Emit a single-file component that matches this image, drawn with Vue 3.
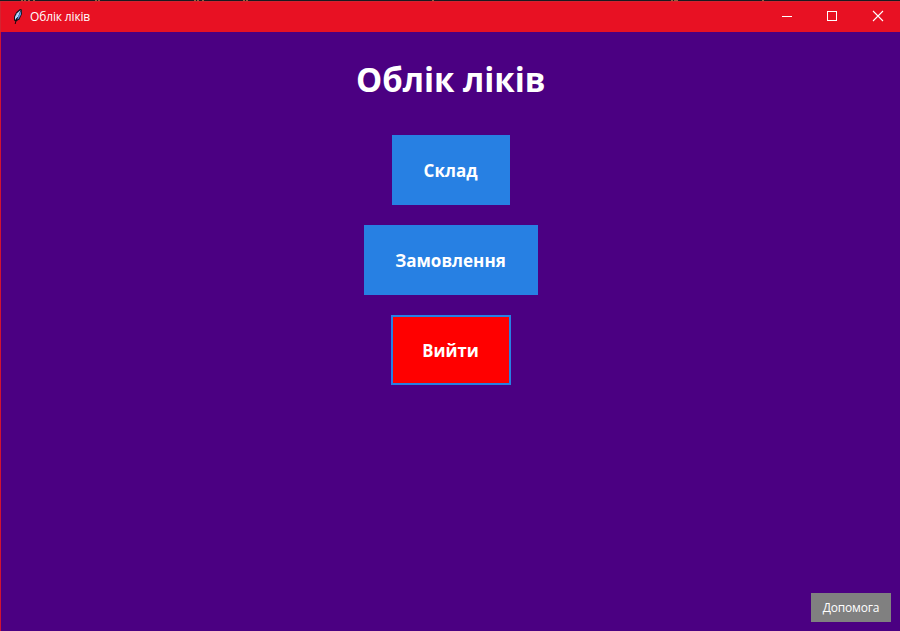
<script setup>
const actions = [
  { label: 'Склад', kind: 'stock' },
  { label: 'Замовлення', kind: 'orders' },
  { label: 'Вийти', kind: 'exit' },
]
const specks = [21, 24, 28, 33, 95, 98, 194, 197, 202, 243, 246, 432, 671, 674, 676, 762]
</script>

<template>
  <div class="window">
    <svg class="backdrop" width="900" height="1" shape-rendering="crispEdges">
      <rect v-for="x in specks" :key="x" :x="x" y="0" width="2" height="1" fill="#96603f" />
    </svg>
    <header class="titlebar">
      <svg class="feather" width="12" height="16" viewBox="0 0 12 16">
        <path d="M8 0 L9.8 .5 L10 5 L7.5 10.2 L4.2 12.4 L2 11.5 L2 7.5 L4.5 3 Z" fill="#10121c" />
        <path d="M8.6 .9 L5 4.2 L3 7.7 L3 11 L6.2 7.5 Z" fill="#b9d8fa" />
        <path d="M9.2 1.5 L9 5.6 L6.9 9.3 L4.4 11 L7 5.8 Z" fill="#5a91da" />
        <path d="M5.5 8.5 L4 11.5 L3.2 15" fill="none" stroke="#08080c" stroke-width=".9" />
      </svg>
      <span class="caption">Облік ліків</span>
      <div class="controls">
        <svg width="46" height="30" shape-rendering="crispEdges"><path d="M18 14.5h10" stroke="#fff" /></svg>
        <svg width="45" height="30" shape-rendering="crispEdges"><rect x="17.5" y="9.5" width="9" height="9" fill="none" stroke="#fff" /></svg>
        <svg width="45" height="30"><path d="M18 9l10 10M28 9l-10 10" fill="none" stroke="#fff" stroke-width="1.1" /></svg>
      </div>
    </header>
    <main class="content">
      <h1>Облік ліків</h1>
      <button v-for="a in actions" :key="a.kind" class="action" :class="a.kind"><span>{{ a.label }}</span></button>
      <button class="help">Допомога</button>
    </main>
  </div>
</template>

<style>
body { margin: 0; overflow: hidden; }
</style>

<style scoped>
.window {
  width: 900px;
  height: 631px;
  display: flex;
  flex-direction: column;
  background: #4b0082;
}
.backdrop { display: block; flex: none; background: #191a20; }
.titlebar {
  box-sizing: border-box;
  height: 31px;
  flex: none;
  display: flex;
  align-items: center;
  padding-left: 11px;
  border-top: 1px solid #d52330;
  border-left: 1px solid #d52330;
  background: #e81123;
  color: #fff;
}
.feather { margin-right: 6px; }
.caption { font: 12px/16px "Open Sans", "Noto Sans", sans-serif; letter-spacing: -0.15px; }
.controls { display: flex; margin-left: auto; }
.controls svg { display: block; }
.content {
  box-sizing: border-box;
  flex: 1;
  display: flex;
  flex-direction: column;
  align-items: center;
  border-left: 1px solid #d01232;
  padding-top: 23px;
}
h1 {
  margin: 0 0 20px;
  height: 60px;
  color: #fff;
  font: bold 34px/49px "Open Sans", "Noto Sans", sans-serif;
  transform: scaleX(0.97);
}
button {
  box-sizing: border-box;
  padding: 0;
  border: 0;
  color: #fff;
  white-space: nowrap;
}
.action {
  height: 70px;
  margin-bottom: 20px;
  background: #2780e3;
  font: bold 18px/70px "Open Sans", "Noto Sans", sans-serif;
}
.action span {
  display: inline-block;
  transform: scaleX(0.945);
}
.stock { width: 118px; }
.orders { width: 174px; }
.exit {
  width: 120px;
  border: 2px solid #2780e3;
  background: #f00;
  line-height: 66px;
}
.exit span { transform: scaleX(0.925); }
.help {
  width: 80px;
  height: 29px;
  margin: auto 9px 9px auto;
  background: #808080;
  font: 12px/29px "Open Sans", "Noto Sans", sans-serif;
  letter-spacing: -0.15px;
}
</style>
